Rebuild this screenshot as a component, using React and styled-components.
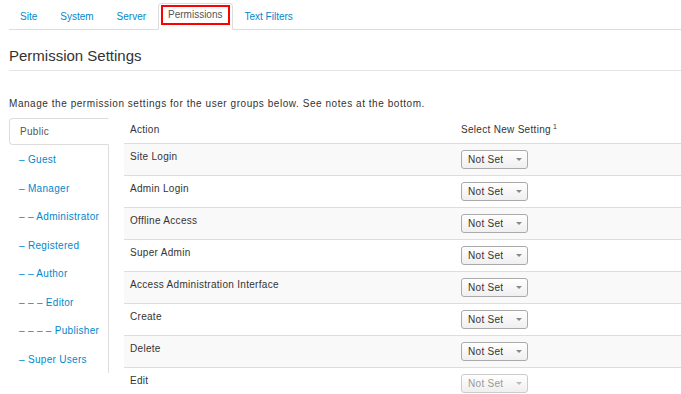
import React from "react";
import styled, { createGlobalStyle } from "styled-components";

const GlobalStyle = createGlobalStyle`
  body {
    margin: 0;
    background: #fff;
    font-family: "Liberation Sans", Arial, sans-serif;
    font-size: 10px;
    color: #333;
    overflow: hidden;
  }
`;

const Page = styled.div`
  width: 740px;
  padding-left: 9px;
`;

const TabBar = styled.div`
  display: flex;
  align-items: flex-start;
  padding-top: 3px;
  height: 26px;
  border-bottom: 1px solid #ddd;
`;

const Tab = styled.div`
  box-sizing: border-box;
  display: flex;
  align-items: flex-start;
  height: 27px;
  padding: ${(p) => (p.$active ? "0 2px" : "0 10px")};
  margin-right: 1px;
  line-height: 25px;
  color: ${(p) => (p.$active ? "#555" : "#0088cc")};
  background: ${(p) => (p.$active ? "#fff" : "transparent")};
  border: 1px solid ${(p) => (p.$active ? "#ddd" : "transparent")};
  border-bottom-color: transparent;
  border-radius: 4px 4px 0 0;
`;

const Highlight = styled.span`
  display: block;
  margin-top: 1px;
  padding: 0 5px;
  line-height: 16px;
  border: 2px solid #f00;
`;

const Heading = styled.h2`
  margin: 16px 0 0;
  padding-bottom: 4px;
  font-size: 15px;
  line-height: 20px;
  font-weight: normal;
  color: #333;
  border-bottom: 1px solid #e5e5e5;
`;

const Intro = styled.p`
  margin: 26px 0 0;
  line-height: 14px;
  letter-spacing: 0.55px;
`;

const Body = styled.div`
  display: flex;
  align-items: flex-start;
  margin-top: 6px;
`;

const Sidebar = styled.div`
  width: 100px;
  padding-top: 1px;
  flex-shrink: 0;
`;

const ActiveGroup = styled.div`
  box-sizing: border-box;
  height: 27px;
  padding-left: 10px;
  line-height: 25px;
  letter-spacing: 0.3px;
  color: #555;
  border: 1px solid #ddd;
  border-right-color: transparent;
  border-radius: 4px 0 0 4px;
`;

const GroupList = styled.div`
  border-right: 1px solid #ddd;
`;

const Group = styled.div`
  height: 28.5px;
  line-height: 29px;
  padding-left: 10px;
  color: #0088cc;
  letter-spacing: 0.3px;
  white-space: nowrap;
`;

const Table = styled.div`
  margin-left: 15px;
  flex: 1;
`;

const Row = styled.div`
  display: grid;
  grid-template-columns: 331px 1fr;
  border-bottom: 1px solid #ddd;
  background: ${(p) => (p.$striped ? "#f9f9f9" : "#fff")};
`;

const Cell = styled.div`
  padding: 6px;
  line-height: 14px;
  letter-spacing: 0.3px;
  min-height: ${(p) => (p.$head ? "14px" : "19px")};
`;

const Sup = styled.sup`
  font-size: 7px;
  line-height: 0;
  margin-left: 2px;
`;

const Select = styled.div`
  box-sizing: border-box;
  width: 67px;
  height: 19px;
  display: flex;
  align-items: center;
  justify-content: space-between;
  padding: 0 5px 0 6px;
  border: 1px solid ${(p) => (p.$disabled ? "#ccc" : "#aaa")};
  border-radius: 3px;
  background: linear-gradient(#fff, #efefef);
  color: ${(p) => (p.$disabled ? "#999" : "#333")};
  letter-spacing: 0.3px;
`;

const Caret = styled.span`
  width: 0;
  height: 0;
  border-left: 3px solid transparent;
  border-right: 3px solid transparent;
  border-top: 3px solid ${(p) => (p.$disabled ? "#bbb" : "#888")};
`;

const tabs = ["Site", "System", "Server", "Permissions", "Text Filters"];

const groups = [
  "– Guest",
  "– Manager",
  "– – Administrator",
  "– Registered",
  "– – Author",
  "– – – Editor",
  "– – – – Publisher",
  "– Super Users",
];

const actions = [
  "Site Login",
  "Admin Login",
  "Offline Access",
  "Super Admin",
  "Access Administration Interface",
  "Create",
  "Delete",
  "Edit",
];

export default function App() {
  return (
    <>
      <GlobalStyle />
      <Page>
        <TabBar>
          {tabs.map((t) =>
            t === "Permissions" ? (
              <Tab key={t} $active>
                <Highlight>{t}</Highlight>
              </Tab>
            ) : (
              <Tab key={t}>{t}</Tab>
            )
          )}
        </TabBar>
        <Heading>Permission Settings</Heading>
        <Intro>
          Manage the permission settings for the user groups below. See notes at the bottom.
        </Intro>
        <Body>
          <Sidebar>
            <ActiveGroup>Public</ActiveGroup>
            <GroupList>
              {groups.map((g) => (
                <Group key={g}>{g}</Group>
              ))}
            </GroupList>
          </Sidebar>
          <Table>
            <Row>
              <Cell $head>Action</Cell>
              <Cell $head>
                Select New Setting<Sup>1</Sup>
              </Cell>
            </Row>
            {actions.map((a, i) => (
              <Row key={a} $striped={i % 2 === 0}>
                <Cell>{a}</Cell>
                <Cell>
                  <Select $disabled={a === "Edit"}>
                    Not Set
                    <Caret $disabled={a === "Edit"} />
                  </Select>
                </Cell>
              </Row>
            ))}
          </Table>
        </Body>
      </Page>
    </>
  );
}
